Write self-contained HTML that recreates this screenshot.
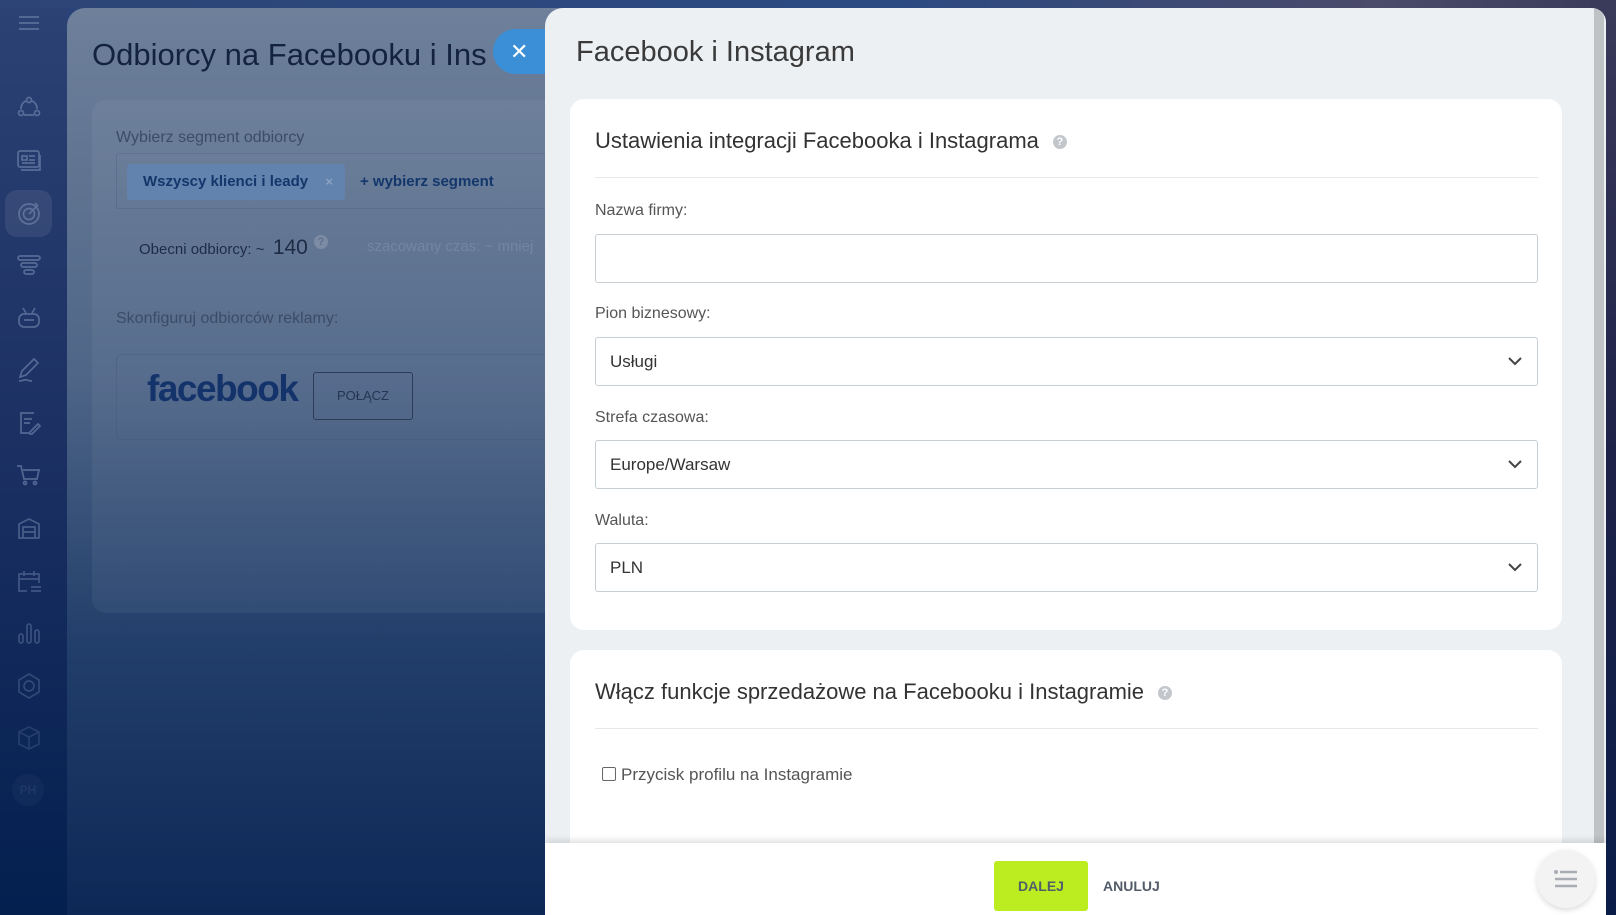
<!DOCTYPE html>
<html><head><meta charset="utf-8"><style>
*{box-sizing:border-box;margin:0;padding:0}
body{width:1616px;height:915px;overflow:hidden;position:relative;font-family:"Liberation Sans",sans-serif;background:#2a4378}
.sb{position:absolute;left:0;top:0;width:67px;height:915px;background:linear-gradient(#2c4274,#1b2f62 50%,#03204f)}
.bg{position:absolute;left:67px;top:8px;width:520px;height:907px;border-radius:18px 0 0 0;background:linear-gradient(#6e809a,#4f6688 40%,#223e6a 70%,#0d2856)}
.rt{position:absolute;left:1590px;top:0;width:26px;height:915px;background:linear-gradient(#3a3a5a,#1e2248 50%,#0a1d48)}
.ic{position:absolute;left:14px;width:30px;height:30px}
.ic svg{width:30px;height:30px;fill:none;stroke:#7a8db3;stroke-width:1.7;opacity:.6}
.slider{position:absolute;left:545px;top:8px;width:1061px;height:907px;background:#edf0f3;border-radius:18px 14px 0 0;overflow:hidden}
.card{position:absolute;left:25px;width:992px;background:#fff;border-radius:14px}
.h{position:absolute;left:25px;font-size:22px;color:#333;}
.q{display:inline-block;width:14px;height:14px;border-radius:50%;background:#c3c7cc;color:#fff;font-size:11px;font-weight:bold;text-align:center;line-height:14px;vertical-align:3px;margin-left:14px}
.hr{position:absolute;left:25px;width:943px;height:1px;background:#e6e8ea}
.lb{position:absolute;left:25px;font-size:16px;color:#555}
.in{position:absolute;left:25px;width:943px;height:49px;border:1px solid #c6cdd3;border-radius:3px;font-size:17px;color:#333;padding:14px 14px;line-height:20px}
.in svg{position:absolute;right:14px;top:18px}
</style></head><body>
<div class="sb"></div>
<div style="position:absolute;left:0;top:0;width:1616px;height:8px;background:linear-gradient(90deg,#2d4576,#2b4a82 55%,#4a4a6a 85%,#3a3a5a)"></div>
<div class="rt"></div>
<div style="position:absolute;left:5px;top:190px;width:47px;height:47px;border-radius:12px;background:rgba(255,255,255,.08)"></div>
<div class="ic" style="top:8px"><svg viewBox="0 0 30 30"><path d="M5 9h20M5 15h20M5 21h20"/></svg></div>
<div class="ic" style="top:92px"><svg viewBox="0 0 30 30"><circle cx="15" cy="8" r="2.5"/><circle cx="7" cy="21" r="2.5"/><circle cx="23" cy="21" r="2.5"/><path d="M10 23h10M7 17a8 8 0 0 1 5-8M23 17a8 8 0 0 0-5-8"/></svg></div>
<div class="ic" style="top:145px"><svg viewBox="0 0 30 30"><rect x="4" y="6" width="21" height="16" rx="2"/><path d="M7 25h19V10M8 11h5v4H8zM15 11h6M15 15h6M8 18h13"/></svg></div>
<div class="ic" style="top:198px"><svg viewBox="0 0 30 30"><circle cx="15" cy="16" r="10"/><circle cx="15" cy="16" r="5.5"/><path d="M15 16l9-9M21 5l3 3"/></svg></div>
<div class="ic" style="top:250px"><svg viewBox="0 0 30 30"><rect x="4" y="6" width="22" height="4" rx="2"/><rect x="7" y="13" width="16" height="4" rx="2"/><rect x="10" y="20" width="10" height="4" rx="2"/></svg></div>
<div class="ic" style="top:303px"><svg viewBox="0 0 30 30"><rect x="5" y="11" width="20" height="13" rx="5"/><path d="M9 5l3 5M21 5l-3 5M10 17h10"/></svg></div>
<div class="ic" style="top:355px"><svg viewBox="0 0 30 30"><path d="M6 22l2-6 12-12 4 4-12 12zM5 26c4 0 6-2 8-1s3 1 5 1"/></svg></div>
<div class="ic" style="top:408px"><svg viewBox="0 0 30 30"><path d="M20 5H7v20h8M10 11h8M10 15h6M16 24l8-8 2 2-8 8h-2z"/></svg></div>
<div class="ic" style="top:460px"><svg viewBox="0 0 30 30"><path d="M3 6h4l3 13h13l2-9H9"/><circle cx="11" cy="23" r="1.5"/><circle cx="21" cy="23" r="1.5"/></svg></div>
<div class="ic" style="top:513px;opacity:.85"><svg viewBox="0 0 30 30"><path d="M5 25V11l10-5 10 5v14zM9 25V14h12v11M9 19h12"/></svg></div>
<div class="ic" style="top:566px;opacity:.75"><svg viewBox="0 0 30 30"><path d="M13 25H5V8h20v9M5 13h20M10 5v5M20 5v5M17 21h10M17 25h10"/></svg></div>
<div class="ic" style="top:618px;opacity:.65"><svg viewBox="0 0 30 30"><rect x="5" y="16" width="4" height="9" rx="2"/><rect x="13" y="6" width="4" height="19" rx="2"/><rect x="21" y="12" width="4" height="13" rx="2"/></svg></div>
<div class="ic" style="top:671px;opacity:.55"><svg viewBox="0 0 30 30"><path d="M15 3l10 6v12l-10 6-10-6V9z"/><circle cx="15" cy="15" r="5"/></svg></div>
<div class="ic" style="top:723px;opacity:.4"><svg viewBox="0 0 30 30"><path d="M15 4l10 5v12l-10 5-10-5V9zM5 9l10 5 10-5M15 14v12"/></svg></div>
<div style="position:absolute;left:12px;top:774px;width:32px;height:32px;border-radius:50%;background:rgba(255,255,255,.03);color:#1f3766;font-size:12px;font-weight:bold;text-align:center;line-height:32px">PH</div>

<div class="bg">
  <div style="position:absolute;left:25px;top:29px;font-size:31px;color:#13233f;white-space:nowrap">Odbiorcy na Facebooku i Ins</div>
  <div style="position:absolute;left:25px;top:92px;width:480px;height:513px;border-radius:14px;background:rgba(255,255,255,.05)">
    <div style="position:absolute;left:24px;top:29px;font-size:16px;color:#3b4c68">Wybierz segment odbiorcy</div>
    <div style="position:absolute;left:24px;top:53px;width:460px;height:56px;border:1px solid rgba(60,80,110,.25);border-radius:3px"></div>
    <div style="position:absolute;left:35px;top:64px;width:218px;height:36px;border-radius:3px;background:#6283ad;color:#13366b;font-size:15px;font-weight:bold;line-height:36px;padding-left:16px">Wszyscy klienci i leady<span style="position:absolute;right:12px;color:#8aa3c4;font-size:13px">×</span></div>
    <div style="position:absolute;left:268px;top:73px;color:#13366b;font-size:15px;font-weight:bold">+ wybierz segment</div>
    <div style="position:absolute;left:47px;top:135px;font-size:15px;color:#1d2b45">Obecni odbiorcy: ~ &nbsp;<span style="font-size:21px">140</span> <span class="q" style="background:#7d8ca4;color:#5f7090;margin-left:2px;vertical-align:9px">?</span></div>
    <div style="position:absolute;left:275px;top:138px;font-size:15px;color:#7386a3;white-space:nowrap">szacowany czas: ~ mniej</div>
    <div style="position:absolute;left:24px;top:210px;font-size:16px;color:#3b4c68">Skonfiguruj odbiorców reklamy:</div>
    <div style="position:absolute;left:24px;top:254px;width:460px;height:86px;border:1px solid rgba(60,80,110,.25);border-radius:6px"></div>
    <div style="position:absolute;left:55px;top:268px;font-size:37px;font-weight:bold;color:#13336a;letter-spacing:-1.5px">facebook</div>
    <div style="position:absolute;left:221px;top:272px;width:100px;height:48px;border:1px solid #2b3b58;border-radius:3px;text-align:center;line-height:46px;font-size:13px;color:#253552">POŁĄCZ</div>
  </div>
</div>
<div style="position:absolute;left:493px;top:29px;width:60px;height:45px;border-radius:23px 0 0 23px;background:#3a8fd6;color:#fff;font-size:22px;line-height:45px;padding-left:17px">✕</div>

<div class="slider">
  <div style="position:absolute;left:31px;top:28px;font-size:29px;color:#3a3a3a;font-weight:300">Facebook i Instagram</div>
  <div class="card" style="top:91px;height:531px">
    <div class="h" style="top:29px">Ustawienia integracji Facebooka i Instagrama<span class="q">?</span></div>
    <div class="hr" style="top:78px"></div>
    <div class="lb" style="top:103px">Nazwa firmy:</div>
    <div class="in" style="top:135px"></div>
    <div class="lb" style="top:206px">Pion biznesowy:</div>
    <div class="in" style="top:238px">Usługi<svg width="16" height="10" viewBox="0 0 16 10"><path d="M2 2l6 6 6-6" fill="none" stroke="#444" stroke-width="2"/></svg></div>
    <div class="lb" style="top:310px">Strefa czasowa:</div>
    <div class="in" style="top:341px">Europe/Warsaw<svg width="16" height="10" viewBox="0 0 16 10"><path d="M2 2l6 6 6-6" fill="none" stroke="#444" stroke-width="2"/></svg></div>
    <div class="lb" style="top:413px">Waluta:</div>
    <div class="in" style="top:444px">PLN<svg width="16" height="10" viewBox="0 0 16 10"><path d="M2 2l6 6 6-6" fill="none" stroke="#444" stroke-width="2"/></svg></div>
  </div>
  <div class="card" style="top:642px;height:300px">
    <div class="h" style="top:29px">Włącz funkcje sprzedażowe na Facebooku i Instagramie<span class="q">?</span></div>
    <div class="hr" style="top:78px"></div>
    <div style="position:absolute;left:32px;top:117px;width:14px;height:14px;border:1px solid #666;border-radius:2px"></div>
    <div style="position:absolute;left:51px;top:115px;font-size:17px;color:#555">Przycisk profilu na Instagramie</div>
  </div>
  <div style="position:absolute;left:1049px;top:0;width:10px;height:907px;background:#c0c3c5;border-radius:0 14px 0 0"></div>
  <div style="position:absolute;left:0;top:835px;width:1061px;height:72px;background:#fff;box-shadow:0 -3px 6px rgba(0,0,0,.12)">
    <div style="position:absolute;left:449px;top:18px;width:94px;height:50px;border-radius:3px;background:#bbed21;color:#535c69;font-size:14px;font-weight:bold;text-align:center;line-height:50px">DALEJ</div>
    <div style="position:absolute;left:558px;top:18px;height:50px;line-height:50px;color:#535c69;font-size:14px;font-weight:bold">ANULUJ</div>
  </div>
</div>
<div style="position:absolute;left:1537px;top:850px;width:58px;height:58px;border-radius:50%;background:#f3f3f4;box-shadow:0 2px 6px rgba(0,0,0,.15)">
  <svg style="position:absolute;left:17px;top:19px" width="24" height="20" viewBox="0 0 24 20"><circle cx="2" cy="3" r="2" fill="#a9adb3"/><path d="M6 3h17M1 10h22M1 17h22" stroke="#a9adb3" stroke-width="2.6"/></svg>
</div>
</body></html>
